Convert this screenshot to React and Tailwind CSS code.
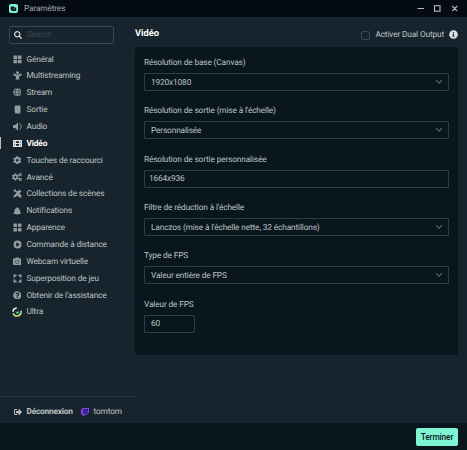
import React from "react";
import { FaSearch, FaGlobe, FaCog, FaCogs, FaBell, FaCamera, FaQuestionCircle, FaSignOutAlt, FaInfoCircle } from "react-icons/fa";

function Svg({ children, className = "size-[9px]" }) {
  return (
    <svg viewBox="0 0 18 18" className={className} fill="currentColor">
      {children}
    </svg>
  );
}

const GeneralIcon = () => (
  <Svg>
    <path d="M1 1h7.2v7H1zM9.8 1H17v7H9.8zM1 9.6h7.2v7H1zM9.8 9.6H17v7H9.8z" />
  </Svg>
);
const MultiIcon = () => (
  <Svg>
    <circle cx="9" cy="3.2" r="2.8" />
    <circle cx="3" cy="7.2" r="2.4" />
    <circle cx="15" cy="7.2" r="2.4" />
    <path d="M7.5 4h3v5l4-2.5 1 2L12 12v2l1 3H5l1-3v-2L2.8 8.5l1-2 3.7 2.5z" />
  </Svg>
);
const OutputIcon = () => (
  <Svg>
    <rect x="4" y="1" width="10.5" height="16" rx="1" />
    <path opacity="0.7" d="M2 3h2v2H2zM2 7h2v2H2zM2 11h2v2H2zM14 3h2v2h-2zM14 7h2v2h-2zM14 11h2v2h-2z" />
  </Svg>
);
const AudioIcon = () => (
  <Svg>
    <path d="M0 6h4L10 1v16l-6-5H0z" />
    <path d="M12 2.5a7 7 0 0 1 0 13" fill="none" stroke="currentColor" strokeWidth="1.8" />
  </Svg>
);
const VideoIcon = () => (
  <Svg>
    <path fillRule="evenodd" d="M0 2h18v14H0zM2.5 5v2H4V5zm0 5.5v2H4v-2zM14 5v2h1.5V5zm0 5.5v2h1.5v-2zM6 4.5v3.3h6V4.5zm0 5.7v3.3h6v-3.3z" />
  </Svg>
);
const ScenesIcon = () => (
  <Svg>
    <path d="M1 1h5v3h3v3H6L4 5H1zM13 1l4 4-9.5 9.5L3 17H1v-3zM10 11l2.5-2.5L17 13v4h-4l-3-3z" />
  </Svg>
);
const ThemeIcon = () => (
  <Svg>
    <rect x="1" y="1" width="7" height="7" rx="1.5" />
    <rect x="10" y="1" width="7" height="7" rx="1" />
    <rect x="1" y="10" width="7" height="7" rx="1" />
    <rect x="10" y="10" width="7" height="7" rx="1.5" />
  </Svg>
);
const RemoteIcon = () => (
  <Svg>
    <path fillRule="evenodd" d="M9 1a8 8 0 1 0 0 16A8 8 0 0 0 9 1M6.5 5.5h3L13 9l-3.5 3.5h-3z" />
  </Svg>
);
const OverlayIcon = () => (
  <Svg>
    <path d="M1 1h6v3.5H4.5V7H1zM11 1h6v6h-3.5V4.5H11zM1 11h3.5v2.5H7V17H1zM13.5 11H17v6h-6v-3.5h2.5z" />
  </Svg>
);
const GearsIcon = () => <FaCogs className="size-[10px] shrink-0" />;
const UltraIcon = () => (
  <Svg className="size-[10px] shrink-0">
    <g fill="none" strokeWidth="2.6">
      <path d="M1.7 8.5A7.4 7.4 0 0 1 8.5 1.7" stroke="#ffffff" />
      <path d="M16 6.5A7.4 7.4 0 0 1 9.5 16.3" stroke="#e3ee7c" />
      <path d="M2 11.2A7.4 7.4 0 0 0 9.5 16.3" stroke="#b9e57e" />
    </g>
    <path d="M6 7.5 9 9l3.5-2-.5 4.5-3 1z" fill="#55d59b" />
  </Svg>
);

const items = [
  ["Général", GeneralIcon],
  ["Multistreaming", MultiIcon],
  ["Stream", FaGlobe],
  ["Sortie", OutputIcon],
  ["Audio", AudioIcon],
  ["Vidéo", VideoIcon],
  ["Touches de raccourci", FaCog],
  ["Avancé", GearsIcon],
  ["Collections de scènes", ScenesIcon],
  ["Notifications", FaBell],
  ["Apparence", ThemeIcon],
  ["Commande à distance", RemoteIcon],
  ["Webcam virtuelle", FaCamera],
  ["Superposition de jeu", OverlayIcon],
  ["Obtenir de l'assistance", FaQuestionCircle],
  ["Ultra", UltraIcon],
];

function Field({ label, value, kind = "select" }) {
  const box =
    kind === "number" ? "w-[51px] pl-[6px]" : kind === "text" ? "w-full pl-[4px]" : "w-full pl-[6px]";
  return (
    <div className="h-[48.37px]">
      <div className="h-[15px] pt-[0.8px] leading-[9px]">{label}</div>
      <div className={`flex h-[18px] items-center justify-between rounded-[1px] border border-[#303b42] pr-[5px] ${box}`}>
        <span className="pt-[1px] leading-[10px]">{value}</span>
        {kind === "select" && (
          <svg viewBox="0 0 8 6" className="h-[6px] w-[8px]" fill="none" stroke="#7c868b">
            <path d="M1.2 1 4 4.4 6.8 1" />
          </svg>
        )}
      </div>
    </div>
  );
}

export default function App() {
  return (
    <div className="flex h-[450px] w-[467px] flex-col overflow-hidden bg-[#17242d] font-['Roboto',sans-serif] text-[8.3px] tracking-[-0.14px] whitespace-nowrap text-[#bdc2c4] [text-rendering:geometricPrecision]">
      <header className="flex h-[17px] shrink-0 items-center bg-[#040b12] pr-[9px] pl-[9px]">
        <svg viewBox="0 0 18 18" className="size-[9px]">
          <rect width="18" height="18" rx="4" fill="#80f5d2" />
          <path d="M3.5 5h6l1.5 2h3.5v7h-9L3.5 11z" fill="#09161d" />
          <path d="M8 9v2M11 9v2" stroke="#80f5d2" strokeWidth="1.2" />
        </svg>
        <span className="ml-[6px] pt-[1px] text-[#a3a8ac]">Paramètres</span>
        <svg viewBox="0 0 42 8" className="ml-auto h-[8px] w-[42px]" fill="none" stroke="#b9bdc0" strokeWidth="1.1">
          <path d="M1.5 3.5h6.5M36.2 1l5 5.2m0-5.2-5 5.2" />
          <rect x="18.5" y="0.7" width="5.5" height="5.5" />
        </svg>
      </header>

      <div className="flex h-[406px] shrink-0">
        <aside className="flex w-[135px] shrink-0 flex-col">
          <div className="mt-[9px] ml-[9px] flex h-[18px] w-[105px] items-center rounded-[2px] border border-[#3b474e] pl-[4px]">
            <FaSearch className="size-[8px] text-[#d0d4d5]" />
            <span className="ml-[5px] pt-[1px] text-[#3b474e]">Search</span>
          </div>
          <nav className="mt-[6.6px]">
            {items.map(([label, Icon]) => {
              const active = label === "Vidéo";
              return (
                <div
                  key={label}
                  className={`flex h-[16.87px] items-center ${active ? "font-bold text-white" : ""}`}
                >
                  <span className={`h-[12px] w-[1px] ${active ? "bg-[#b9bfc1]" : ""}`} />
                  <span className={`ml-[11px] flex w-[10px] justify-center ${active ? "text-[#e0e3e4]" : "text-[#949c9f]"}`}>
                    <Icon className="size-[8.5px]" />
                  </span>
                  <span className="ml-[4.5px] pt-[1.6px]">{label}</span>
                </div>
              );
            })}
          </nav>
          <div className="mt-auto flex h-[27px] w-[136px] items-center border-t border-[#25323a] pt-[4px] pl-[14px]">
            <FaSignOutAlt className="size-[8px]" />
            <span className="ml-[4.5px] w-[46px] pt-[1px] font-bold tracking-[-0.2px]">Déconnexion</span>
            <svg viewBox="0 0 16 16" className="ml-[8px] size-[8px]">
              <path d="M3.5 0H16v9l-4 4H9l-3 3H4v-3H0V3.5z" fill="#8142f4" />
              <path d="M4.5 2h9.5v6.5L11.5 11H8.5l-2 2v-2h-2z" fill="#2a1768" />
              <path d="M8 4v4M11.5 4v4" stroke="#8142f4" strokeWidth="1.5" />
            </svg>
            <span className="ml-[5px] pt-[1px]">tomtom</span>
          </div>
        </aside>

        <main className="w-[323px]">
          <div className="flex h-[30px] items-center">
            <h1 className="mt-[3px] text-[9.3px] font-bold tracking-normal text-white">Vidéo</h1>
            <span className="mt-[6px] ml-auto size-[9px] rounded-[2px] border border-[#3b474e]" />
            <span className="mt-[7px] ml-[5.5px]">Activer Dual Output</span>
            <FaInfoCircle className="mt-[5px] ml-[5px] size-[9px] text-[#dce0e1]" />
          </div>
          <section className="h-[308px] rounded-[2px] bg-[#09161d] px-[9px] pt-[11px]">
            <Field label="Résolution de base (Canvas)" value="1920x1080" />
            <Field label="Résolution de sortie (mise à l'échelle)" value="Personnalisée" />
            <Field label="Résolution de sortie personnalisée" value="1664x936" kind="text" />
            <Field label="Filtre de réduction à l'échelle" value="Lanczos (mise à l'échelle nette, 32 échantillons)" />
            <Field label="Type de FPS" value="Valeur entière de FPS" />
            <Field label="Valeur de FPS" value="60" kind="number" />
          </section>
        </main>
      </div>

      <footer className="flex h-[27px] items-center justify-end bg-[#09161d] pr-[9px]">
        <button className="h-[18px] w-[42px] rounded-[2px] bg-[#80f5d2] pt-[1px] text-center font-medium tracking-[-0.1px] text-[#09161d]">
          Terminer
        </button>
      </footer>
    </div>
  );
}
